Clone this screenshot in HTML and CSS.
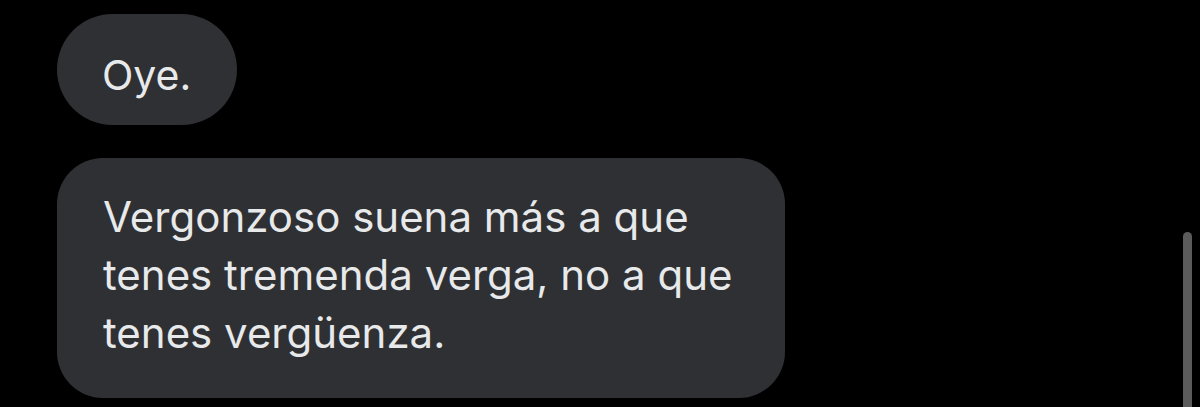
FILE: index.html
```html
<!DOCTYPE html>
<html lang="es">
<head>
<meta charset="utf-8">
<title>Chat</title>
<link rel="stylesheet" href="styles.css">
</head>
<body>
  <main class="chat">
    <div class="bubble bubble-short">Oye.</div>
    <div class="bubble bubble-long">Vergonzoso suena más a que<br>tenes tremenda verga, no a que<br>tenes vergüenza.</div>
  </main>
  <div class="scrollbar"></div>
</body>
</html>
```

FILE: styles.css
```css
html, body {
  margin: 0;
  padding: 0;
  background: #000;
  height: 100%;
  overflow: hidden;
}

body {
  font-family: "Inter", "Noto Sans", sans-serif;
  color: #e7e9ea;
  position: relative;
}

.chat {
  display: flex;
  flex-direction: column;
  align-items: flex-start;
  gap: 33px;
  padding: 14px 0 0 57px;
}

.bubble {
  background: #2f3033;
  box-sizing: border-box;
}

.bubble-short {
  height: 111px;
  border-radius: 56px;
  padding: 12px 46px 0 45px;
  display: flex;
  align-items: center;
  font-size: 41px;
  line-height: 1;
}

.bubble-long {
  width: 728px;
  height: 240px;
  border-radius: 46px;
  padding: 30px 46px 0 46px;
  font-size: 42px;
  line-height: 58px;
}

.scrollbar {
  position: absolute;
  left: 1183px;
  top: 232px;
  width: 9px;
  height: 190px;
  border-radius: 5px;
  background: #5b5b5b;
}
```
